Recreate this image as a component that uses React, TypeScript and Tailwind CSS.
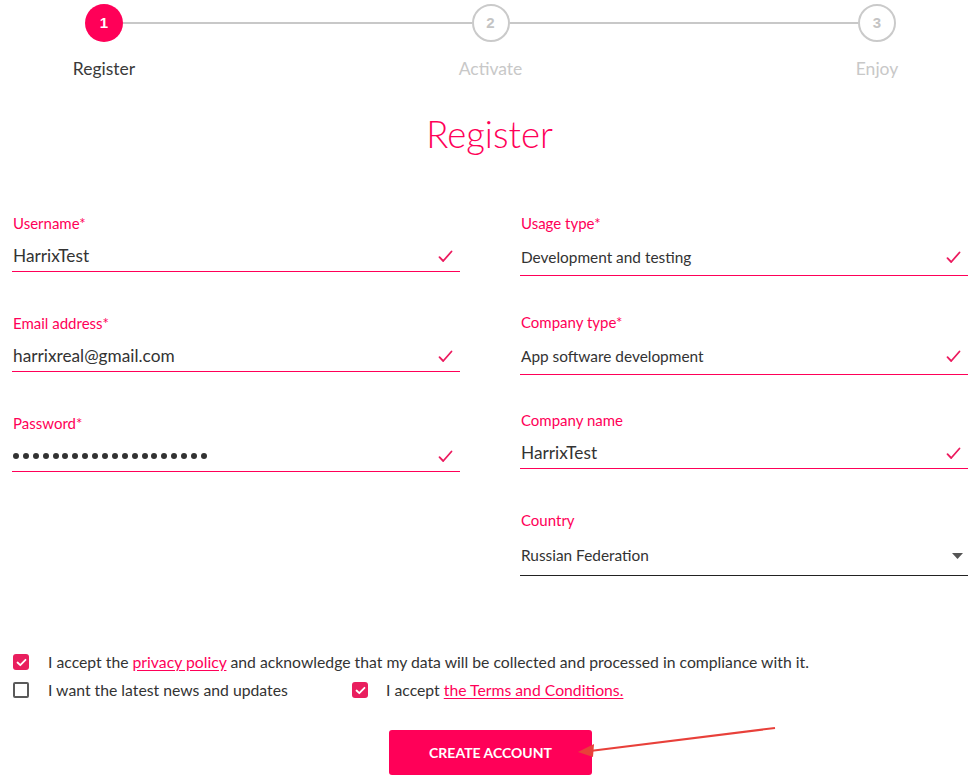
import React from "react";

function Check({ className = "" }: { className?: string }) {
  return (
    <svg width="15" height="13" viewBox="0 0 15 13" className={className}>
      <path d="M1.5 7.2 L5.2 11 L13.5 1.5" fill="none" stroke="#ec1a5e" strokeWidth="1.8" strokeLinecap="round" strokeLinejoin="round" />
    </svg>
  );
}

function Label({ children }: { children: React.ReactNode }) {
  return <div className="h-[20px] pl-[1px] text-[15px] leading-[20px] text-[#ff0058]">{children}</div>;
}

function InputField({ label, value, mt = "" }: { label: string; value: React.ReactNode; mt?: string }) {
  return (
    <div className={`flex flex-col ${mt}`}>
      <Label>{label}</Label>
      <div className="mt-[8px] h-[31px] flex items-center justify-between border-b border-[#ff0058] pl-[1px] pr-[7px]">
        <span className="text-[17.25px] text-[#333]">{value}</span>
        <Check />
      </div>
    </div>
  );
}

function SelectField({ label, value, mt = "", check = true }: { label: string; value: string; mt?: string; check?: boolean }) {
  return (
    <div className={`flex flex-col ${mt}`}>
      <Label>{label}</Label>
      <div className={`${check ? "mt-[7px] h-[36px] border-[#ff0058]" : "mt-[7px] h-[39px] border-[#222]"} flex items-center justify-between border-b pl-[1px] pr-[7px]`}>
        <span className="text-[15.4px] text-[#333]">{value}</span>
        {check ? (
          <Check />
        ) : (
          <svg width="11" height="6" viewBox="0 0 11 6" className="mr-[-2px]">
            <path d="M0 0 H11 L5.5 6 Z" fill="#555" />
          </svg>
        )}
      </div>
    </div>
  );
}

function Box({ checked }: { checked: boolean }) {
  if (checked)
    return (
      <span className="w-[16px] h-[16px] rounded-[3px] bg-[#e91e5e] flex items-center justify-center shrink-0">
        <svg width="11" height="9" viewBox="0 0 11 9">
          <path d="M1.5 4.5 L4.3 7.2 L9.5 1.8" fill="none" stroke="white" strokeWidth="1.8" strokeLinecap="round" strokeLinejoin="round" />
        </svg>
      </span>
    );
  return <span className="w-[16px] h-[16px] rounded-[2px] border-2 border-[#5a5a5a] bg-white shrink-0" />;
}

const dots = Array.from({ length: 20 }, (_, i) => i);

export default function App() {
  return (
    <div className="relative w-[976px] h-[778px] bg-white overflow-hidden [font-family:Lato,'Noto_Sans',sans-serif]">
      {/* Stepper */}
      <div className="pt-[4px] pl-[85px] pr-[80px] flex items-center">
        <div className="w-[38px] h-[38px] rounded-full bg-[#ff0058] flex items-center justify-center text-white text-[15px] font-bold [font-family:Arial,'Liberation_Sans',sans-serif]">1</div>
        <div className="flex-1 h-[2px] bg-[#c8c8c8]" />
        <div className="w-[38px] h-[38px] rounded-full border-2 border-[#cacaca] flex items-center justify-center text-[#c4c4c4] text-[15px] font-bold [font-family:Arial,'Liberation_Sans',sans-serif]">2</div>
        <div className="flex-1 h-[2px] bg-[#c8c8c8]" />
        <div className="w-[38px] h-[38px] rounded-full border-2 border-[#cacaca] flex items-center justify-center text-[#c4c4c4] text-[15px] font-bold [font-family:Arial,'Liberation_Sans',sans-serif]">3</div>
      </div>
      <div className="mt-[15px] pl-[64px] pr-[59px] flex justify-between text-[17.5px] leading-[24px]">
        <div className="w-[80px] text-center text-[#3a3a3a] whitespace-nowrap">Register</div>
        <div className="w-[80px] text-center text-[#c8c8c8] whitespace-nowrap">Activate</div>
        <div className="w-[80px] text-center text-[#c8c8c8] whitespace-nowrap">Enjoy</div>
      </div>

      {/* Title */}
      <h1 className="mt-[30px] pl-[3px] text-center text-[36.5px] leading-[46px] font-light text-[#ff0058]">Register</h1>

      {/* Form */}
      <div className="mt-[56px] pl-[12px] pr-[8px] grid grid-cols-2 gap-x-[60px]">
        <div className="flex flex-col">
          <InputField label="Username*" value="HarrixTest" />
          <InputField label="Email address*" value="harrixreal@gmail.com" mt="mt-[41px]" />
          <InputField
            label="Password*"
            mt="mt-[41px]"
            value={
              <span className="flex items-center gap-[3.9px]">
                {dots.map((i) => (
                  <span key={i} className="w-[6px] h-[6px] rounded-full bg-[#333]" />
                ))}
              </span>
            }
          />
        </div>
        <div className="flex flex-col">
          <SelectField label="Usage type*" value="Development and testing" />
          <SelectField label="Company type*" value="App software development" mt="mt-[36px]" />
          <div className="mt-[35px]">
            <InputField label="Company name" value="HarrixTest" />
          </div>
          <SelectField label="Country" value="Russian Federation" mt="mt-[41px]" check={false} />
        </div>
      </div>

      {/* Checkboxes */}
      <div className="mt-[78px] pl-[13px] flex flex-col gap-[12px] text-[15.75px] leading-[16px] text-[#333]">
        <div className="flex items-center gap-[19px]">
          <Box checked />
          <span className="whitespace-nowrap">
            I accept the <span className="text-[#ff0058] underline underline-offset-2">privacy policy</span> and acknowledge that my data will be collected and processed in compliance with it.
          </span>
        </div>
        <div className="flex items-center">
          <div className="w-[339px] flex items-center gap-[19px]">
            <Box checked={false} />
            <span>I want the latest news and updates</span>
          </div>
          <div className="flex items-center gap-[18px]">
            <Box checked />
            <span>
              I accept <span className="text-[#ff0058] underline underline-offset-2">the Terms and Conditions.</span>
            </span>
          </div>
        </div>
      </div>

      {/* Button */}
      <div className="mt-[32px] flex justify-center pl-[5px]">
        <button className="w-[203px] h-[45px] rounded-[3px] bg-[#ff0058] text-white text-[14px] font-bold uppercase">Create account</button>
      </div>

      {/* Annotation arrow */}
      <svg className="absolute left-0 top-0 pointer-events-none" width="976" height="778">
        <line x1="775" y1="728" x2="590" y2="751" stroke="#e8403a" strokeWidth="2" />
        <path d="M578 752 L594 744 L593 757 Z" fill="#e8403a" />
      </svg>
    </div>
  );
}
